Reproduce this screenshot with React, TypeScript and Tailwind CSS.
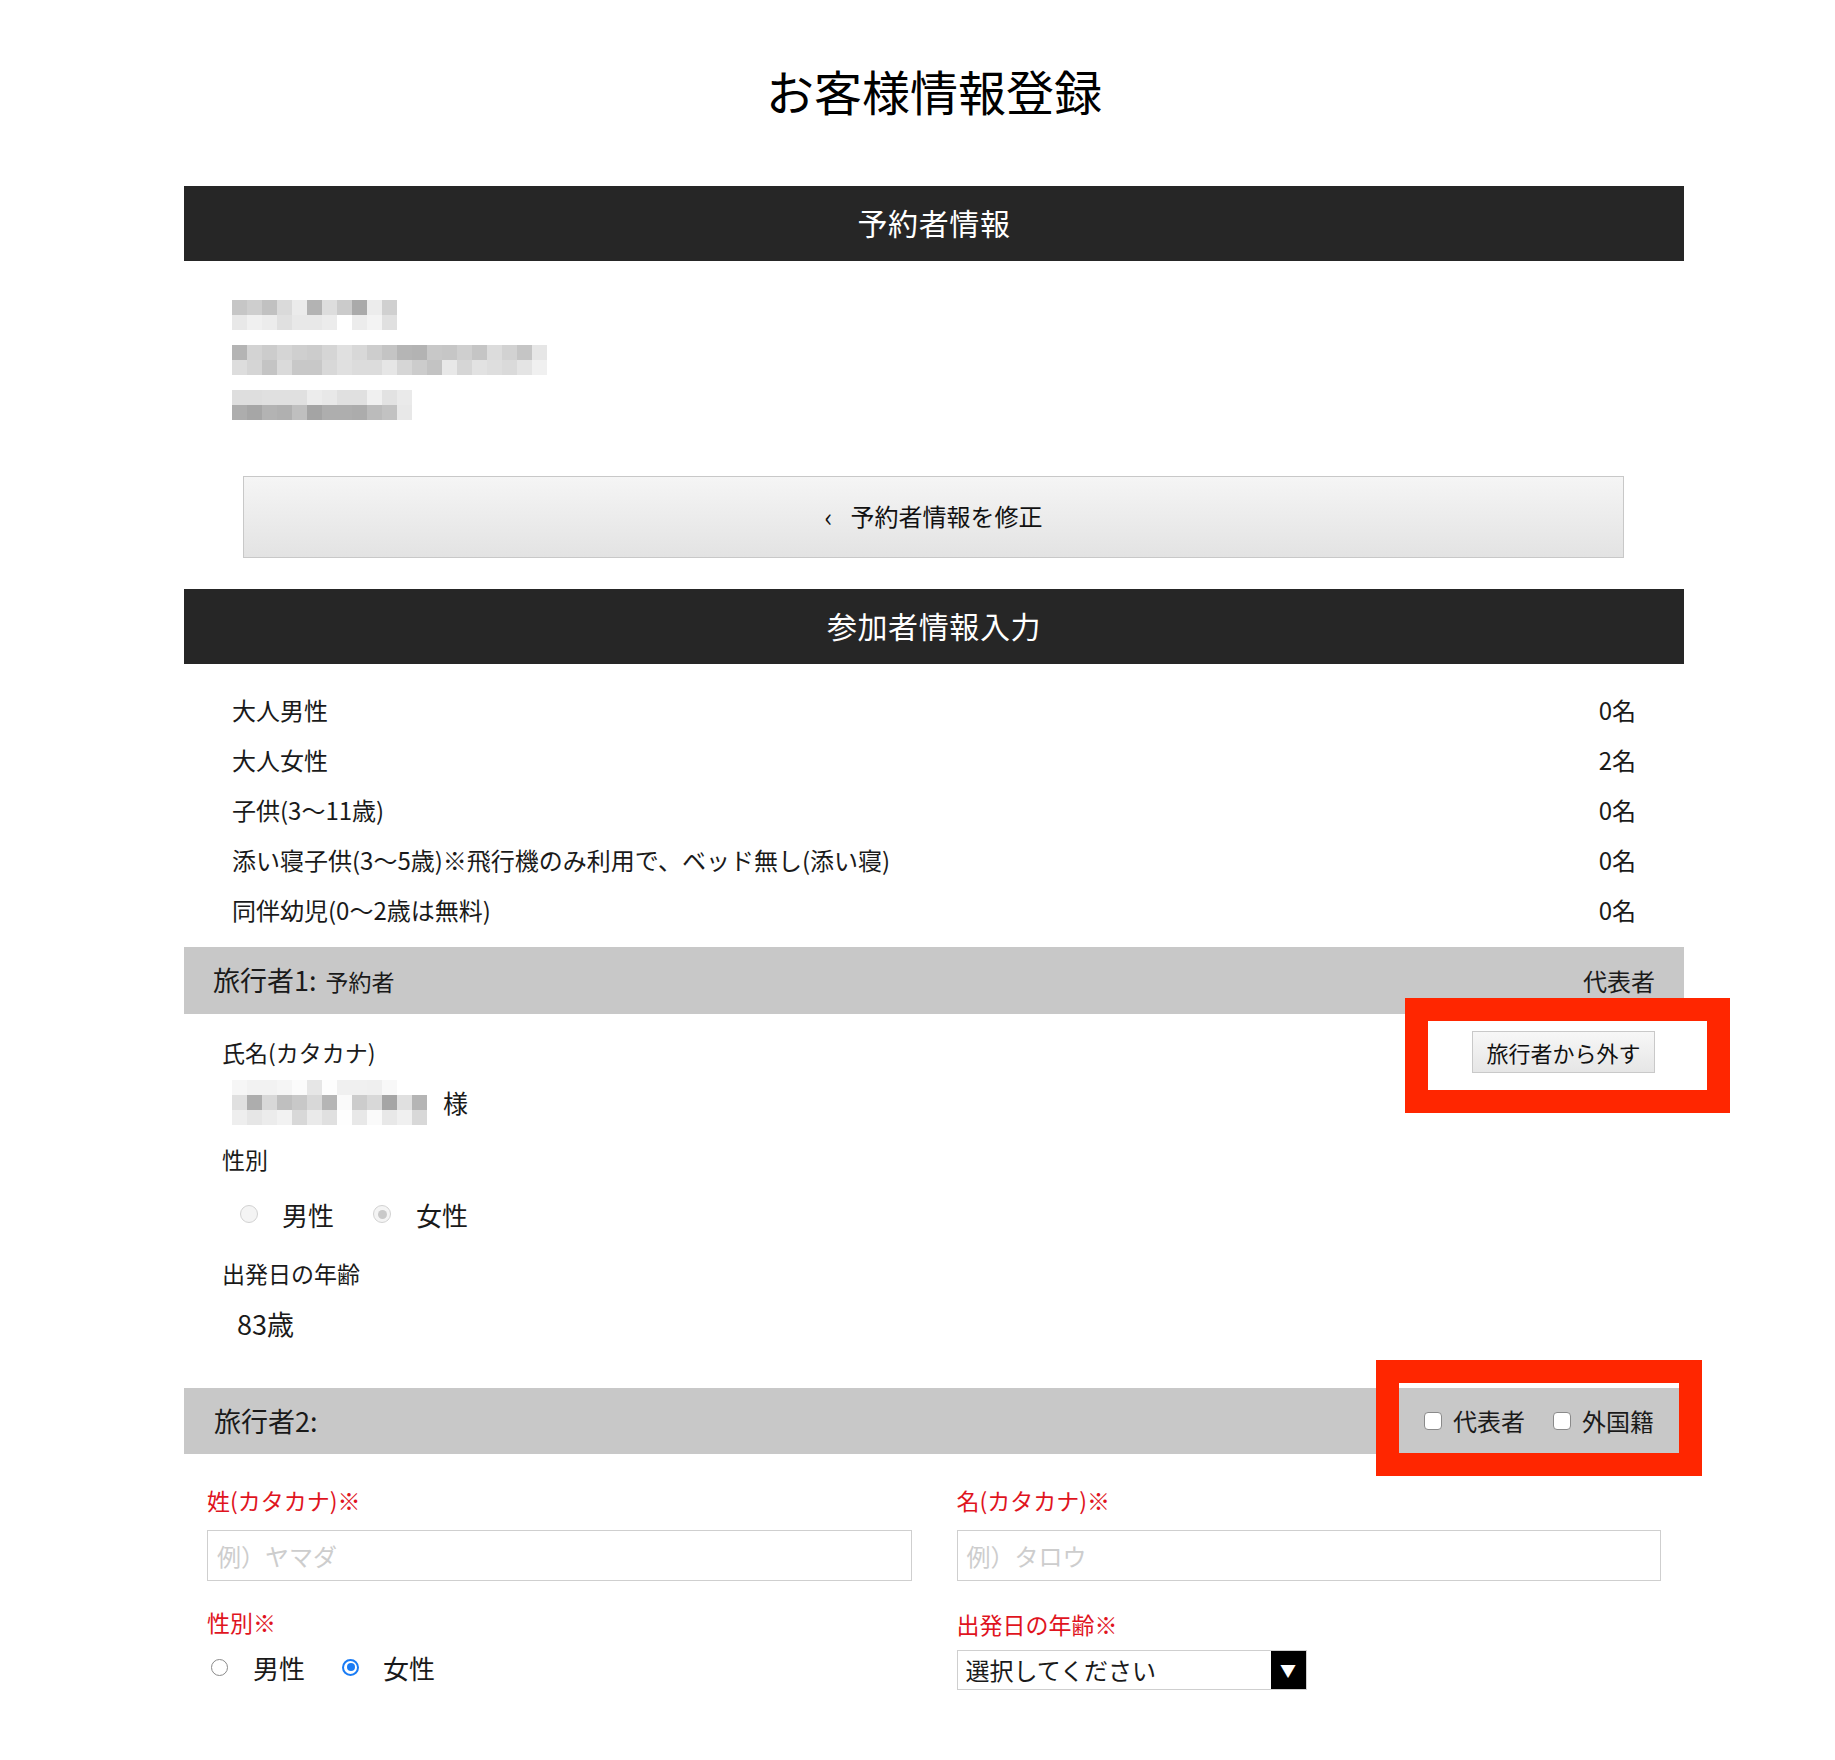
import React from "react";

// pixelated placeholders (grey levels, one per 15px cell)
const contactBlur: string[][][] = [
  [
    ["c6", "ce", "c1", "da", "eb", "b3", "dd", "cb", "aa", "ec", "d0"],
    ["e8", "f0", "ec", "e0", "e8", "e8", "ec", "ff", "ec", "f3", "e0"],
  ],
  [
    ["b4", "d3", "cc", "d5", "cf", "cc", "d5", "e0", "d8", "cd", "c4", "b5", "b3", "c8", "c6", "cf", "c5", "dc", "d2", "c5", "e6"],
    ["dd", "d5", "c4", "da", "c8", "c8", "d8", "e0", "dc", "dc", "e6", "d6", "cc", "c3", "e8", "d6", "e2", "de", "da", "e4", "f0"],
  ],
  [
    ["de", "de", "e0", "e0", "e0", "ec", "e8", "e0", "e0", "f0", "e2", "ea"],
    ["ad", "a6", "b3", "b0", "bf", "a4", "ae", "ae", "ac", "bb", "c2", "e8"],
  ],
];

const nameBlur: string[][] = [
  ["f6", "f2", "f2", "f5", "fb", "e6", "fd", "f0", "f0", "ef", "f8", "ff", "ff"],
  ["e0", "ad", "d8", "bf", "c8", "d8", "b5", "fa", "cc", "d8", "a5", "e0", "b5"],
  ["ee", "e6", "ec", "f2", "d8", "ea", "e0", "fe", "e8", "fa", "e8", "f0", "d8"],
];

const counts = [
  { label: "大人男性", value: "0名" },
  { label: "大人女性", value: "2名" },
  { label: "子供(3〜11歳)", value: "0名" },
  { label: "添い寝子供(3〜5歳)※飛行機のみ利用で、ベッド無し(添い寝)", value: "0名" },
  { label: "同伴幼児(0〜2歳は無料)", value: "0名" },
];

function Mosaic({ rows }: { rows: string[][] }) {
  return (
    <div className="flex flex-col">
      {rows.map((row, i) => (
        <div key={i} className="flex">
          {row.map((c, j) => (
            <div key={j} className="w-[15px] h-[15px]" style={{ backgroundColor: `#${c}${c}${c}` }} />
          ))}
        </div>
      ))}
    </div>
  );
}

function SectionBar({ children }: { children: React.ReactNode }) {
  return (
    <div className="h-[75px] bg-[#262626] flex items-center justify-center text-white text-[30px] leading-[36px] pb-[3px] tracking-[0.02em]">
      {children}
    </div>
  );
}

function GreyRadio({ checked }: { checked?: boolean }) {
  return (
    <span className="w-[18px] h-[18px] rounded-full border border-[#d2d2d2] bg-[#f4f4f4] flex items-center justify-center">
      {checked && <span className="w-[9px] h-[9px] rounded-full bg-[#c9c9c9]" />}
    </span>
  );
}

function Radio({ checked }: { checked?: boolean }) {
  return checked ? (
    <span className="w-[17px] h-[17px] rounded-full border-2 border-[#1a7cf5] flex items-center justify-center">
      <span className="w-[8px] h-[8px] rounded-full bg-[#1a7cf5]" />
    </span>
  ) : (
    <span className="w-[17px] h-[17px] rounded-full border border-[#8a8a8a] bg-white" />
  );
}

function Checkbox() {
  return <span className="w-[18px] h-[18px] rounded-[4px] border border-[#8a8a8a] bg-white" />;
}

export default function App() {
  return (
    <div className="min-h-[1760px] bg-white text-[#1a1a1a] font-['Noto_Sans_CJK_JP','Noto_Sans_CJK_SC',sans-serif]">
      <div className="ml-[184px] w-[1500px] pb-[60px]">
        {/* Title */}
        <h1 className="pt-[69px] text-center text-[48px] leading-[52px] text-black font-['Liberation_Serif','Noto_Sans_CJK_JP',serif]">
          お客様情報登録
        </h1>

        {/* Booker */}
        <div className="mt-[65px]">
          <SectionBar>予約者情報</SectionBar>
        </div>
        <div className="pl-[48px] pt-[39px] flex flex-col gap-[15px]">
          {contactBlur.map((rows, i) => (
            <Mosaic key={i} rows={rows} />
          ))}
        </div>
        <button className="mt-[56px] mx-[59px] w-[1381px] h-[82px] border border-[#c8c8c8] bg-gradient-to-b from-[#f5f5f5] to-[#e3e3e3] flex items-center justify-center gap-[18px] text-[24px] text-[#111]">
          <span className="text-[26px] leading-none -mt-[2px]">‹</span>
          <span className="-mt-[2px]">予約者情報を修正</span>
        </button>

        {/* Participants */}
        <div className="mt-[31px]">
          <SectionBar>参加者情報入力</SectionBar>
        </div>
        <div className="px-[48px] pt-[21px]">
          {counts.map((c) => (
            <div key={c.label} className="h-[50px] flex items-center justify-between text-[24px]">
              <span>{c.label}</span>
              <span>{c.value}</span>
            </div>
          ))}
        </div>

        {/* Traveller 1 */}
        <div className="relative mt-[12px]">
          <div className="h-[67px] bg-[#c8c8c8] px-[29px] flex items-center justify-between">
            <div className="flex items-baseline gap-[9px]">
              <span className="text-[27px]">旅行者1:</span>
              <span className="text-[23px]">予約者</span>
            </div>
            <span className="text-[24px]">代表者</span>
          </div>
          <div className="flex justify-between items-start">
            <div className="pl-[38px] pt-[22px] pb-[46px]">
              <div className="text-[23px] leading-[32px]">氏名(カタカナ)</div>
              <div className="mt-[12px] pl-[10px] flex items-center gap-[16px]">
                <Mosaic rows={nameBlur} />
                <span className="text-[25px]">様</span>
              </div>
              <div className="mt-[18px] text-[23px] leading-[32px]">性別</div>
              <div className="mt-[19px] h-[40px] pl-[18px] flex items-center text-[26px]">
                <GreyRadio />
                <span className="ml-[24px]">男性</span>
                <span className="ml-[39px]"><GreyRadio checked /></span>
                <span className="ml-[25px]">女性</span>
              </div>
              <div className="mt-[23px] text-[23px] leading-[32px]">出発日の年齢</div>
              <div className="mt-[17px] pl-[15px] h-[36px] flex items-center text-[27px]">83歳</div>
            </div>
            <button className="mt-[17px] mr-[29px] w-[183px] h-[42px] border border-[#c9c9c9] bg-gradient-to-b from-[#f7f7f7] to-[#e6e6e6] text-[22px] text-[#111] flex items-center justify-center">
              旅行者から外す
            </button>
          </div>
          {/* annotation */}
          <div className="absolute left-[1221px] top-[51px] w-[325px] h-[115px] border-[23px] border-[#ff2600]" />
        </div>

        {/* Traveller 2 */}
        <div className="relative">
          <div className="h-[66px] bg-[#c8c8c8] px-[30px] flex items-center justify-between">
            <span className="text-[27px]">旅行者2:</span>
            <div className="flex items-center text-[24px]">
              <label className="flex items-center gap-[11px]">
                <Checkbox />
                <span>代表者</span>
              </label>
              <label className="ml-[28px] flex items-center gap-[11px]">
                <Checkbox />
                <span>外国籍</span>
              </label>
            </div>
          </div>
          {/* annotation */}
          <div className="absolute left-[1192px] -top-[28px] w-[326px] h-[116px] border-[23px] border-[#ff2600]" />
        </div>

        <div className="px-[23px] pt-[30px] grid grid-cols-2 gap-x-[45px]">
          <div>
            <div className="text-[23px] leading-[32px] text-[#e0141e]">姓(カタカナ)※</div>
            <div className="mt-[14px] h-[51px] border border-[#cfcfcf] flex items-center px-[9px] text-[24px] text-[#cdcdcd]">
              例）ヤマダ
            </div>
            <div className="mt-[25px] text-[23px] leading-[32px] text-[#e0141e]">性別※</div>
            <div className="mt-[11px] h-[36px] pl-[4px] flex items-center text-[26px]">
              <Radio />
              <span className="ml-[25px]">男性</span>
              <span className="ml-[37px]"><Radio checked /></span>
              <span className="ml-[24px]">女性</span>
            </div>
          </div>
          <div>
            <div className="text-[23px] leading-[32px] text-[#e0141e]">名(カタカナ)※</div>
            <div className="mt-[14px] h-[51px] border border-[#cfcfcf] flex items-center px-[9px] text-[24px] text-[#cdcdcd]">
              例）タロウ
            </div>
            <div className="mt-[27px] text-[23px] leading-[32px] text-[#e0141e]">出発日の年齢※</div>
            <div className="mt-[10px] w-[350px] h-[40px] border border-[#cfcfcf] flex items-stretch">
              <span className="flex-1 flex items-center pl-[8px] text-[24px]">選択してください</span>
              <span className="w-[35px] bg-black text-white flex items-center justify-center text-[16px]">▼</span>
            </div>
          </div>
        </div>
      </div>
    </div>
  );
}
